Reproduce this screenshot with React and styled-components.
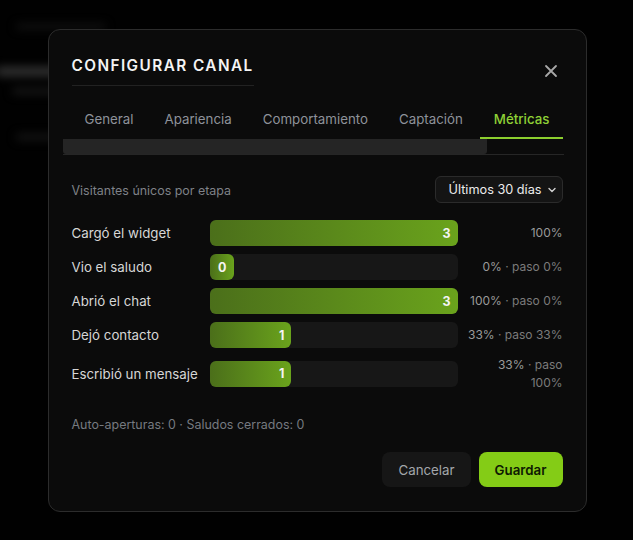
import React from "react";
import styled, { createGlobalStyle } from "styled-components";

const Global = createGlobalStyle`
  html, body { margin: 0; padding: 0; background: #000; }
  body { font-family: Inter, "Noto Sans", sans-serif; -webkit-font-smoothing: antialiased; }
  * { box-sizing: border-box; }
`;

const Page = styled.div`
  width: 633px;
  height: 540px;
  position: relative;
  overflow: hidden;
  background: #020202;
`;

const Backdrop = styled.div`
  position: absolute;
  inset: 0;
  filter: blur(5px);
  display: flex;
  flex-direction: column;
`;

const GhostLine = styled.div`
  height: ${(p) => p.$h}px;
  width: ${(p) => p.$w}px;
  margin-top: ${(p) => p.$y}px;
  margin-left: ${(p) => p.$x}px;
  background: ${(p) => p.$c};
  border-radius: 4px;
`;

const Overlay = styled.div`
  position: absolute;
  inset: 0;
  background: rgba(0, 0, 0, 0.5);
  display: flex;
  justify-content: center;
  padding-top: 29px;
`;

const Modal = styled.div`
  width: 539px;
  height: 483px;
  margin-left: 1px;
  background: #0b0b0b;
  border: 1px solid #2c2c2c;
  border-radius: 12px;
  padding: 23px 23px 24px 23px;
  display: flex;
  flex-direction: column;
  color: #e8e8e8;
`;

const Header = styled.div`
  display: flex;
  justify-content: space-between;
  align-items: flex-start;
`;

const Title = styled.h2`
  margin: 0;
  padding-top: 1px;
  font-size: 15.3px;
  line-height: 24px;
  font-weight: 600;
  letter-spacing: 1.45px;
  color: #f4f4f4;
  padding-bottom: 7px;
  border-bottom: 1px solid #222;
`;

const Close = styled.button`
  background: none;
  border: none;
  padding: 0;
  margin: 11px 5px 0 0;
  width: 14px;
  height: 14px;
  display: flex;
  color: #a8a8a8;
  cursor: pointer;
`;

const TabsWrap = styled.div`
  margin: 13px -1px 0 -9px;
  display: flex;
  flex-direction: column;
`;

const TabList = styled.div`
  display: flex;
  gap: 3px;
  padding-left: 8px;
`;

const Tab = styled.button`
  background: none;
  border: none;
  border-bottom: 2px solid ${(p) => (p.$active ? "#8ccf2e" : "transparent")};
  padding: 10px 14px 8px 14px;
  font-family: inherit;
  font-size: 13.3px;
  line-height: 20px;
  font-weight: ${(p) => (p.$active ? 500 : 400)};
  color: ${(p) => (p.$active ? "#8fd136" : "#8e929a")};
  cursor: pointer;
  white-space: nowrap;
`;

const ScrollTrack = styled.div`
  height: 16px;
  border-bottom: 1px solid #262626;
  display: flex;
`;

const ScrollThumb = styled.div`
  width: 424px;
  height: 15px;
  background: #252525;
  border-radius: 0 0 3px 3px;
`;

const Body = styled.div`
  padding-top: 21px;
  display: flex;
  flex-direction: column;
  flex: 1;
`;

const TopRow = styled.div`
  display: flex;
  justify-content: space-between;
  align-items: center;
`;

const Caption = styled.span`
  font-size: 12.45px;
  color: #7f8288;
  padding-top: 1px;
`;

const Select = styled.div`
  height: 27px;
  width: 128px;
  background: #141414;
  border: 1px solid #2b2b2b;
  border-radius: 6px;
  display: flex;
  align-items: center;
  justify-content: space-between;
  padding: 0 4px 0 13px;
  font-size: 12.7px;
  white-space: nowrap;
  color: #ececec;
`;

const Rows = styled.div`
  margin-top: 17px;
  display: flex;
  flex-direction: column;
  gap: 8px;
`;

const Row = styled.div`
  display: grid;
  grid-template-columns: 138px 248px 1fr;
  align-items: center;
  min-height: 26px;
`;

const Label = styled.span`
  font-size: 13.3px;
  color: #d6d6d6;
`;

const Track = styled.div`
  height: 26px;
  background: #171717;
  border-radius: 6px;
  display: flex;
`;

const Fill = styled.div`
  height: 100%;
  min-width: 24px;
  border-radius: 6px;
  background: linear-gradient(90deg, #4b6f1a 0%, #6aa31c 100%);
  display: flex;
  align-items: center;
  justify-content: flex-end;
  padding-right: 7px;
  font-size: 12.5px;
  font-weight: 700;
  color: #f4f4f4;
`;

const Stat = styled.div`
  text-align: right;
  font-size: 12px;
  line-height: 17.5px;
  color: #9a9a9a;
  padding-left: 8px;
`;

const Dim = styled.span`
  color: #7b7b7b;
`;

const Footer = styled.div`
  margin-top: 26px;
  font-size: 12.45px;
  color: #767a80;
`;

const Actions = styled.div`
  margin-top: auto;
  display: flex;
  justify-content: flex-end;
  gap: 8px;
`;

const Button = styled.button`
  height: 35px;
  padding: 0 16px;
  border-radius: 8px;
  border: none;
  font-family: inherit;
  font-size: 13.3px;
  font-weight: ${(p) => (p.$primary ? 600 : 400)};
  background: ${(p) => (p.$primary ? "#84cc16" : "#161616")};
  color: ${(p) => (p.$primary ? "#0e1a02" : "#a3a6ab")};
  cursor: pointer;
`;

const rows = [
  { label: "Cargó el widget", value: 3, pct: 100, main: "100%", rest: "" },
  { label: "Vio el saludo", value: 0, pct: 0, main: "0%", rest: " · paso 0%" },
  { label: "Abrió el chat", value: 3, pct: 100, main: "100%", rest: " · paso 0%" },
  { label: "Dejó contacto", value: 1, pct: 33, main: "33%", rest: " · paso 33%" },
  { label: "Escribió un mensaje", value: 1, pct: 33, main: "33%", rest: " · paso 100%" },
];

const tabs = ["General", "Apariencia", "Comportamiento", "Captación", "Métricas"];

export default function App() {
  return (
    <Page>
      <Global />
      <Backdrop>
        <GhostLine $y={24} $h={5} $w={90} $x={16} $c="#2a2a2a" />
        <GhostLine $y={38} $h={9} $w={175} $x={-4} $c="#6a6a6a" />
        <GhostLine $y={12} $h={6} $w={60} $x={12} $c="#333" />
        <GhostLine $y={40} $h={6} $w={40} $x={16} $c="#2e2e2e" />
      </Backdrop>
      <Overlay>
        <Modal>
          <Header>
            <Title>CONFIGURAR CANAL</Title>
            <Close aria-label="Cerrar">
              <svg width="14" height="14" viewBox="0 0 14 14" fill="none" stroke="currentColor" strokeWidth="1.8" strokeLinecap="round">
                <path d="M2 2 L12 12 M12 2 L2 12" />
              </svg>
            </Close>
          </Header>
          <TabsWrap>
            <TabList>
              {tabs.map((t) => (
                <Tab key={t} $active={t === "Métricas"}>{t}</Tab>
              ))}
            </TabList>
            <ScrollTrack>
              <ScrollThumb />
            </ScrollTrack>
          </TabsWrap>
          <Body>
            <TopRow>
              <Caption>Visitantes únicos por etapa</Caption>
              <Select>
                <span>Últimos 30 días</span>
                <svg width="12" height="12" viewBox="0 0 12 12" fill="none" stroke="#d0d0d0" strokeWidth="1.4" strokeLinecap="round" strokeLinejoin="round">
                  <path d="M3 4.5 L6 7.5 L9 4.5" />
                </svg>
              </Select>
            </TopRow>
            <Rows>
              {rows.map((r) => (
                <Row key={r.label}>
                  <Label>{r.label}</Label>
                  <Track>
                    <Fill style={{ width: `${r.pct}%` }}>{r.value}</Fill>
                  </Track>
                  <Stat>
                    {r.main}
                    {r.rest && <Dim>{r.rest}</Dim>}
                  </Stat>
                </Row>
              ))}
            </Rows>
            <Footer>Auto-aperturas: 0 · Saludos cerrados: 0</Footer>
            <Actions>
              <Button>Cancelar</Button>
              <Button $primary>Guardar</Button>
            </Actions>
          </Body>
        </Modal>
      </Overlay>
    </Page>
  );
}
